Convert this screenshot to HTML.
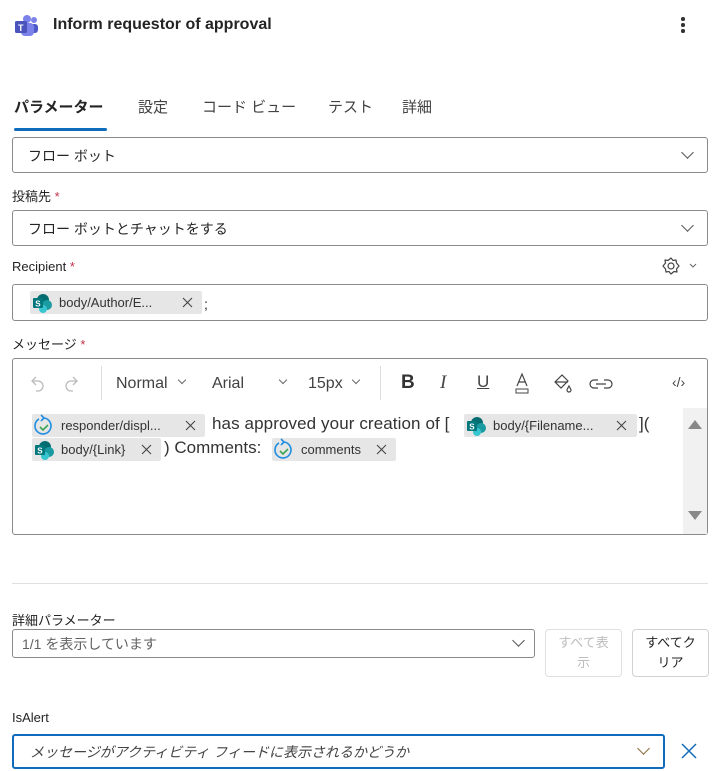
<!DOCTYPE html>
<html><head><meta charset="utf-8"><style>
*{box-sizing:border-box;margin:0;padding:0}
body{width:716px;height:771px;background:#fff;font-family:"Liberation Sans","Noto Sans CJK JP",sans-serif;color:#242424;position:relative;overflow:hidden}
.a{position:absolute}
.box{position:absolute;border:1px solid #8a8a8a;border-radius:3px;background:#fff}
.lbl{position:absolute;font-size:13px;color:#242424}
.req{color:#c4314b}
.chev{position:absolute;width:9px;height:9px;border-right:1px solid #555;border-bottom:1px solid #555;transform:rotate(45deg)}
.chip{position:absolute;height:23px;background:#e6e6e6;border-radius:2px;font-size:13px;color:#333;line-height:23px;white-space:nowrap}
.x{position:absolute;top:6px;width:11px;height:11px}
.tab{position:absolute;top:96px;font-size:15px;color:#424242}
</style></head><body>
<svg width="0" height="0" style="position:absolute"><defs>
<symbol id="sp" viewBox="0 0 20 20"><circle cx="11" cy="7" r="6" fill="#036c70"/><circle cx="15" cy="12" r="5" fill="#1a9ba1"/><circle cx="11" cy="16" r="4" fill="#37c6d0"/><rect x="1" y="5" width="10" height="10" rx="1" fill="#03787c"/><text x="3.2" y="13.5" font-size="8" fill="#fff" font-family="Liberation Sans" font-weight="bold">S</text></symbol>
<symbol id="ap" viewBox="0 0 22 23"><path d="M6 5a8 8 0 1 0 5-1" fill="none" stroke="#1f8ee0" stroke-width="1.6"/><path d="M8 1l3 3-3 3" fill="none" stroke="#1f8ee0" stroke-width="1.6"/><path d="M7 13l3 3 5-5" fill="none" stroke="#3aa655" stroke-width="1.6"/></symbol>
<symbol id="x" viewBox="0 0 11 11"><path d="M1 1l9 9M10 1l-9 9" stroke="#444" stroke-width="1.1"/></symbol>
</defs></svg>
<svg class="a" style="left:14px;top:14px" width="26" height="24" viewBox="0 0 26 24"><circle cx="20" cy="6" r="3" fill="#7b83eb"/><circle cx="13" cy="5" r="4" fill="#7b83eb"/><rect x="16" y="10" width="8" height="9" rx="3" fill="#5059c9"/><rect x="7" y="9" width="13" height="13" rx="4" fill="#7b83eb"/><rect x="1" y="7" width="12" height="12" rx="1.5" fill="#4b53bc"/><text x="4" y="17" font-size="9" fill="#fff" font-family="Liberation Sans" font-weight="bold">T</text></svg>
<div class="a" style="left:53px;top:16px;font-size:16px;font-weight:bold;color:#242424">Inform requestor of approval</div>
<div class="a" style="left:681px;top:17px;width:4px"><div style="width:3.5px;height:3.5px;background:#333;border-radius:50%;margin-bottom:2.5px"></div><div style="width:3.5px;height:3.5px;background:#333;border-radius:50%;margin-bottom:2.5px"></div><div style="width:3.5px;height:3.5px;background:#333;border-radius:50%"></div></div>

<div class="tab" style="left:14px;color:#242424;font-weight:bold">パラメーター</div>
<div class="tab" style="left:138px">設定</div>
<div class="tab" style="left:202px">コード ビュー</div>
<div class="tab" style="left:328px">テスト</div>
<div class="tab" style="left:402px">詳細</div>
<div class="a" style="left:14px;top:128px;width:93px;height:3px;background:#0f6cbd;border-radius:2px"></div>

<div class="box" style="left:12px;top:137px;width:696px;height:36px"></div>
<div class="a" style="left:28px;top:146px;font-size:14px">フロー ボット</div>
<div class="chev" style="left:683px;top:148px"></div>

<div class="lbl" style="left:12px;top:186px">投稿先 <span class="req">*</span></div>
<div class="box" style="left:12px;top:210px;width:696px;height:36px"></div>
<div class="a" style="left:28px;top:219px;font-size:14px">フロー ボットとチャットをする</div>
<div class="chev" style="left:683px;top:221px"></div>

<div class="lbl" style="left:12px;top:259px">Recipient <span class="req">*</span></div>
<svg class="a" style="left:660px;top:256px" width="40" height="22" viewBox="0 0 40 22"><circle cx="11" cy="10" r="3" fill="none" stroke="#444" stroke-width="1.2"/><path d="M11 2l2 2.5 3-.5.5 3L19 10l-2.5 3 .5 3-3-.5L11 18l-2-2.5-3 .5-.5-3L3 10l2.5-3L5 4l3 .5z" fill="none" stroke="#444" stroke-width="1.2" stroke-linejoin="round"/><path d="M30 8l3 3 3-3" fill="none" stroke="#666" stroke-width="1"/></svg>
<div class="box" style="left:12px;top:284px;width:696px;height:37px"></div>
<div class="chip" style="left:30px;top:291px;width:172px"><svg class="a" style="left:2px;top:2px" width="20" height="20"><use href="#sp"/></svg><span style="position:absolute;left:29px">body/Author/E...</span><svg class="x" style="left:152px"><use href="#x"/></svg></div>
<div class="a" style="left:204px;top:296px;font-size:14px">;</div>

<div class="lbl" style="left:12px;top:334px">メッセージ <span class="req">*</span></div>
<div class="box" style="left:12px;top:358px;width:696px;height:177px"></div>
<svg class="a" style="left:28px;top:373px" width="60" height="22" viewBox="0 0 60 22"><path d="M8 4L4 8l4 4M4 8h6a5 5 0 010 10H8" fill="none" stroke="#bbb" stroke-width="1.3"/><path d="M45 4l4 4-4 4M49 8h-6a5 5 0 000 10h2" fill="none" stroke="#bbb" stroke-width="1.3"/></svg>
<div class="a" style="left:101px;top:366px;width:1px;height:34px;background:#ddd"></div>
<div class="a" style="left:116px;top:375px;font-size:16px;color:#424242">Normal</div>
<div class="chev" style="left:179px;top:377px;width:6px;height:6px;border-color:#666"></div>
<div class="a" style="left:212px;top:375px;font-size:16px;color:#424242">Arial</div>
<div class="chev" style="left:280px;top:377px;width:6px;height:6px;border-color:#666"></div>
<div class="a" style="left:308px;top:375px;font-size:16px;color:#424242">15px</div>
<div class="chev" style="left:353px;top:377px;width:6px;height:6px;border-color:#666"></div>
<div class="a" style="left:380px;top:366px;width:1px;height:34px;background:#ddd"></div>
<div class="a" style="left:401px;top:372px;font-size:19px;font-weight:bold;color:#333">B</div>
<div class="a" style="left:440px;top:372px;font-size:19px;font-style:italic;color:#444;font-family:'Liberation Serif',serif">I</div>
<div class="a" style="left:477px;top:372px;font-size:17px;color:#444;text-decoration:underline">U</div>
<svg class="a" style="left:512px;top:372px" width="120" height="24" viewBox="0 0 120 24"><path d="M5 14L10 2l5 12M7 10h6" fill="none" stroke="#444" stroke-width="1.2"/><rect x="4" y="17" width="12" height="4" fill="none" stroke="#444"/><path d="M50 3l-7 7 6 6 7-7zM43 10h13M57 14c-1 2-2 3-2 4a2 2 0 004 0c0-1-1-2-2-4z" fill="none" stroke="#444" stroke-width="1.2"/><path d="M86 8h-4a4 4 0 000 8h4M92 8h4a4 4 0 010 8h-4M84 12h10" fill="none" stroke="#444" stroke-width="1.2"/></svg>
<div class="a" style="left:672px;top:374px;font-size:14px;color:#444">‹/›</div>

<div class="chip" style="left:32px;top:414px;width:173px"><svg class="a" style="left:1px;top:0" width="22" height="23"><use href="#ap"/></svg><span style="position:absolute;left:29px">responder/displ...</span><svg class="x" style="left:153px"><use href="#x"/></svg></div>
<div class="a" style="left:212px;top:414px;font-size:17px;color:#333;letter-spacing:0.1px">has approved your creation of [</div>
<div class="chip" style="left:464px;top:414px;width:173px"><svg class="a" style="left:2px;top:2px" width="20" height="20"><use href="#sp"/></svg><span style="position:absolute;left:29px">body/{Filename...</span><svg class="x" style="left:152px"><use href="#x"/></svg></div>
<div class="a" style="left:639px;top:414px;font-size:17px;color:#333">](</div>
<div class="chip" style="left:32px;top:438px;width:129px"><svg class="a" style="left:2px;top:2px" width="20" height="20"><use href="#sp"/></svg><span style="position:absolute;left:29px">body/{Link}</span><svg class="x" style="left:109px"><use href="#x"/></svg></div>
<div class="a" style="left:164px;top:438px;font-size:17px;color:#333">) Comments:</div>
<div class="chip" style="left:272px;top:438px;width:124px"><svg class="a" style="left:1px;top:0" width="22" height="23"><use href="#ap"/></svg><span style="position:absolute;left:29px">comments</span><svg class="x" style="left:104px"><use href="#x"/></svg></div>
<div class="a" style="left:683px;top:408px;width:24px;height:126px;background:#f1f1f1"></div>
<div class="a" style="left:688px;top:420px;width:0;height:0;border-left:7px solid transparent;border-right:7px solid transparent;border-bottom:9px solid #888"></div>
<div class="a" style="left:688px;top:511px;width:0;height:0;border-left:7px solid transparent;border-right:7px solid transparent;border-top:9px solid #888"></div>

<div class="a" style="left:12px;top:583px;width:696px;height:1px;background:#e0e0e0"></div>
<div class="lbl" style="left:12px;top:610px">詳細パラメーター</div>
<div class="box" style="left:12px;top:629px;width:523px;height:29px"></div>
<div class="a" style="left:22px;top:634px;font-size:14px;color:#616161">1/1 を表示しています</div>
<div class="chev" style="left:514px;top:636px"></div>
<div class="a" style="left:545px;top:629px;width:77px;height:48px;border:1px solid #e0e0e0;border-radius:4px;font-size:13px;color:#bdbdbd;text-align:center;line-height:20px;padding-top:3px">すべて表<br>示</div>
<div class="a" style="left:632px;top:629px;width:77px;height:48px;border:1px solid #d1d1d1;border-radius:4px;font-size:13px;color:#242424;text-align:center;line-height:20px;padding-top:3px">すべてク<br>リア</div>

<div class="lbl" style="left:12px;top:710px">IsAlert</div>
<div class="a" style="left:12px;top:734px;width:653px;height:35px;border:2px solid #0f6cbd;border-radius:3px"></div>
<div class="a" style="left:30px;top:742px;font-size:14px;font-style:italic;color:#444">メッセージがアクティビティ フィードに表示されるかどうか</div>
<div class="chev" style="left:639px;top:744px;border-color:#8a6a3a"></div>
<svg class="a" style="left:681px;top:743px" width="16" height="16" viewBox="0 0 16 16"><path d="M1 1l14 14M15 1L1 15" stroke="#0f6cbd" stroke-width="1.5"/></svg>
</body></html>
